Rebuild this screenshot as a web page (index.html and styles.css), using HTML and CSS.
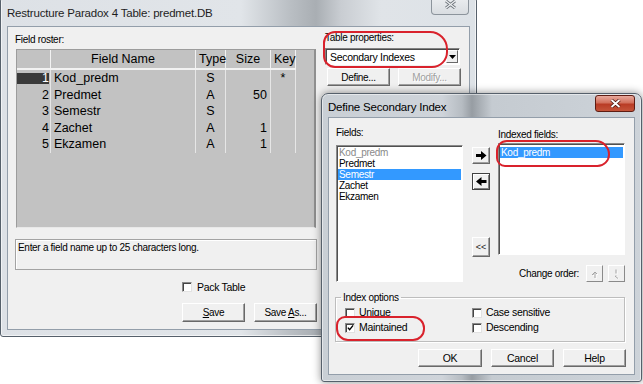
FILE: index.html
```html
<!DOCTYPE html>
<html lang="en">
<head>
    <meta charset="UTF-8">
    <meta name="viewport" content="width=device-width, initial-scale=1.0">
    <title>Restructure Paradox 4 Table</title>
    <link rel="stylesheet" href="styles.css">
</head>
<body>

<div class="desktop">

    <!-- main restructure window (inactive) -->
    <div class="window restructure">
        <div class="titlebar">
            <span class="title">Restructure Paradox 4 Table: predmet.DB</span>
            <span class="close inactive">
                <svg width="11" height="9" viewBox="0 0 11 9">
                    <path d="M1 1 L10 8 M10 1 L1 8" stroke="#6f757b" stroke-width="3" fill="none"/>
                    <path d="M1 1 L10 8 M10 1 L1 8" stroke="#eef0f2" stroke-width="1.2" fill="none"/>
                </svg>
            </span>
        </div>
        <div class="client main-client">
            <div class="roster">
                <div class="label">Field roster:</div>
                <div class="grid">
                    <div class="cell head"></div>
                    <div class="cell head">Field Name</div>
                    <div class="cell head">Type</div>
                    <div class="cell head">Size</div>
                    <div class="cell head">Key</div>
                    <div class="cell head blank"></div>

                    <div class="cell num current">1</div>
                    <div class="cell name">Kod_predm</div>
                    <div class="cell type">S</div>
                    <div class="cell size"></div>
                    <div class="cell key">*</div>
                    <div class="cell blank"></div>

                    <div class="cell num">2</div>
                    <div class="cell name">Predmet</div>
                    <div class="cell type">A</div>
                    <div class="cell size">50</div>
                    <div class="cell key"></div>
                    <div class="cell blank"></div>

                    <div class="cell num">3</div>
                    <div class="cell name">Semestr</div>
                    <div class="cell type">S</div>
                    <div class="cell size"></div>
                    <div class="cell key"></div>
                    <div class="cell blank"></div>

                    <div class="cell num">4</div>
                    <div class="cell name">Zachet</div>
                    <div class="cell type">A</div>
                    <div class="cell size">1</div>
                    <div class="cell key"></div>
                    <div class="cell blank"></div>

                    <div class="cell num">5</div>
                    <div class="cell name">Ekzamen</div>
                    <div class="cell type">A</div>
                    <div class="cell size">1</div>
                    <div class="cell key"></div>
                    <div class="cell blank"></div>
                </div>
                <div class="hint">Enter a field name up to 25 characters long.</div>
                <div class="pack">
                    <span class="check"></span>
                    <span>Pack Table</span>
                </div>
                <div class="btn-row save-row">
                    <button class="btn"><u>S</u>ave</button>
                    <button class="btn">Save <u>A</u>s...</button>
                </div>
            </div>
            <div class="props">
                <div class="label">Table properties:</div>
                <div class="combo">
                    <span class="combo-text">Secondary Indexes</span>
                    <span class="combo-drop">
                        <svg width="7" height="4" viewBox="0 0 7 4"><polygon points="0,0 7,0 3.5,4" fill="#000"/></svg>
                    </span>
                </div>
                <div class="btn-row define-row">
                    <button class="btn">Define...</button>
                    <button class="btn" disabled>Modify...</button>
                </div>
            </div>
        </div>
    </div>

    <!-- define secondary index dialog (active) -->
    <div class="window dialog">
        <div class="titlebar">
            <span class="title">Define Secondary Index</span>
            <span class="close active">
                <svg width="11" height="9" viewBox="0 0 11 9">
                    <path d="M1.5 1 L9.5 8 M9.5 1 L1.5 8" stroke="#4a1710" stroke-width="3.4" fill="none"/>
                    <path d="M1.5 1 L9.5 8 M9.5 1 L1.5 8" stroke="#ffffff" stroke-width="1.8" fill="none"/>
                </svg>
            </span>
        </div>
        <div class="client dlg-client">
            <div class="pickers">
                <div class="fields-col">
                    <div class="label">Fields:</div>
                    <div class="listbox fields">
                        <div class="item used">Kod_predm</div>
                        <div class="item">Predmet</div>
                        <div class="item selected">Semestr</div>
                        <div class="item">Zachet</div>
                        <div class="item">Ekzamen</div>
                    </div>
                </div>
                <div class="movers">
                    <button class="mover add">
                        <svg width="11" height="9" viewBox="0 0 11 9"><polygon points="0,3 5,3 5,0 10.5,4.5 5,9 5,6 0,6" fill="#000"/></svg>
                    </button>
                    <button class="mover remove">
                        <svg width="11" height="9" viewBox="0 0 11 9"><polygon points="10.5,3 5.5,3 5.5,0 0,4.5 5.5,9 5.5,6 10.5,6" fill="#000"/></svg>
                    </button>
                    <button class="mover clear">&lt;&lt;</button>
                </div>
                <div class="indexed-col">
                    <div class="label">Indexed fields:</div>
                    <div class="listbox indexed">
                        <div class="item selected">Kod_predm</div>
                    </div>
                    <div class="order">
                        <span>Change order:</span>
                        <button class="order-btn">
                            <svg width="9" height="10" viewBox="0 0 9 10">
                                <path d="M2 5.5 H3.5 M5 9 V3 M3 5 L5 3 L7 5" stroke="#ffffff" stroke-width="1" fill="none" transform="translate(1 1)"/>
                                <path d="M2 5.5 H3.5 M5 9 V3 M3 5 L5 3 L7 5" stroke="#a3a3a3" stroke-width="1" fill="none"/>
                            </svg>
                        </button>
                        <button class="order-btn">
                            <svg width="9" height="10" viewBox="0 0 9 10">
                                <path d="M4 0.5 V4.5 M4 6.5 V7 M3 7 L6 9.5" stroke="#ffffff" stroke-width="1" fill="none" transform="translate(1 1)"/>
                                <path d="M4 0.5 V4.5 M4 6.5 V7 M3 7 L6 9.5" stroke="#a3a3a3" stroke-width="1" fill="none"/>
                            </svg>
                        </button>
                    </div>
                </div>
            </div>

            <fieldset class="options">
                <legend>Index options</legend>
                <div class="opt-grid">
                    <div class="opt"><span class="check"></span>Unique</div>
                    <div class="opt"><span class="check"></span>Case sensitive</div>
                    <div class="opt">
                        <span class="check">
                            <svg width="8" height="8" viewBox="0 0 8 8"><path d="M1 3.5 L3 6 L7 1" stroke="#000" stroke-width="1.6" fill="none"/></svg>
                        </span>Maintained
                    </div>
                    <div class="opt"><span class="check"></span>Descending</div>
                </div>
            </fieldset>

            <div class="btn-row dlg-buttons">
                <button class="btn ok">OK</button>
                <button class="btn">Cancel</button>
                <button class="btn">Help</button>
            </div>
        </div>
    </div>

    <!-- red hand-drawn marks -->
    <div class="mark mark-props"></div>
    <div class="mark mark-indexed"></div>
    <div class="mark mark-maintained"></div>

</div>

</body>
</html>
```

FILE: styles.css
```css
* {
    box-sizing: border-box;
}

body {
    margin: 0;
    background-color: #ffffff;
    font-family: "Liberation Sans", Arial, sans-serif;
    font-size: 10px;
    letter-spacing: -0.3px;
    color: #000;
}

.desktop {
    position: relative;
    width: 643px;
    height: 384px;
    overflow: hidden;
}

/* window frames */

.window {
    position: absolute;
    display: flex;
    flex-direction: column;
    padding: 0 7px 7px;
    border: 1px solid #56606b;
    border-radius: 7px 7px 3px 3px;
}

.restructure {
    left: 0;
    top: -6px;
    width: 477px;
    height: 343px;
    background: linear-gradient(90deg, #dde1e6 0, #e1e5e9 240px, #b9bec3 290px, #a9aeb3 315px, #c9cdd2 340px, #e0e4e8 380px, #dde2e7 477px);
    box-shadow: inset 0 0 0 1px rgba(255, 255, 255, 0.6);
}

.dialog {
    left: 321px;
    top: 93px;
    width: 321px;
    height: 289px;
    background: linear-gradient(90deg, #c9cfd5 0, #cfd4da 120px, #b6bcc2 140px, #979da3 150px, #c5cbd1 170px, #cdd3d9 321px);
    box-shadow: inset 0 0 0 1px rgba(255, 255, 255, 0.5), 0 0 9px rgba(0, 0, 0, 0.45);
    z-index: 2;
}

.titlebar {
    display: flex;
    justify-content: space-between;
    align-items: flex-start;
    flex: none;
}

.restructure .titlebar {
    height: 32px;
}

.dialog .titlebar {
    height: 24px;
}

.title {
    margin-left: -1px;
    font-size: 11.5px;
    letter-spacing: -0.2px;
    line-height: 14px;
    color: #1e1e1e;
}

.restructure .title {
    padding-top: 11px;
}

.dialog .title {
    padding-top: 6px;
    color: #000;
}

.close {
    display: flex;
    justify-content: center;
    align-items: center;
    border-radius: 0 0 4px 4px;
}

.close.inactive {
    width: 38px;
    height: 20px;
    background: linear-gradient(#eef0f2, #d9dde1);
    border: 1px solid #8c949c;
    border-top: none;
}

.close.active {
    width: 40px;
    height: 17px;
    margin-top: 1px;
    margin-right: -1px;
    border: 1px solid #5e1c12;
    border-radius: 3px;
    background: linear-gradient(#e8a99c 0, #d2705c 45%, #b93c25 55%, #c4543a 100%);
}

.client {
    flex: 1;
    background-color: #f0f0f0;
    box-shadow: 0 0 0 1px #939eaa;
}

.label {
    line-height: 12px;
    height: 12px;
}

/* buttons */

.btn-row {
    display: flex;
    justify-content: flex-end;
}

.btn {
    height: 19px;
    width: 63px;
    padding: 0;
    font-family: inherit;
    font-size: 10px;
    letter-spacing: -0.3px;
    color: #000;
    background-color: #f0f0f0;
    border: 1px solid;
    border-color: #ffffff #696969 #696969 #ffffff;
    box-shadow: inset -1px -1px #a0a0a0;
}

.btn:disabled {
    color: #a0a0a0;
    text-shadow: 1px 1px #ffffff;
}

.btn u {
    text-decoration: underline;
    text-underline-offset: 1px;
}

/* restructure window contents */

.main-client {
    display: flex;
}

.roster {
    width: 302px;
    margin-left: 7px;
    padding-top: 7px;
}

.grid {
    display: grid;
    grid-template-columns: 34px 145px 30px 45px 25px 1fr;
    grid-template-rows: 20px repeat(5, 16.5px);
    align-content: start;
    width: 300px;
    height: 179px;
    margin: 3px 0 0 1px;
    background-color: #c2c2c2;
    border-top: 1px solid #9c9c9c;
    border-left: 1px solid #9c9c9c;
    border-right: 2px solid #8f8f8f;
    border-bottom: 1px solid #e8e8e8;
    font-size: 12.5px;
    letter-spacing: 0;
}

.cell {
    line-height: 16.5px;
    padding: 0 3px;
    border-right: 1px solid #e6e6e6;
    white-space: nowrap;
}

.cell.head {
    line-height: 18px;
    text-align: center;
    border-right-color: #f2f2f2;
    border-bottom: 2px solid #f2f2f2;
}

.cell.blank {
    border: none;
}

.cell.num {
    text-align: right;
    padding: 0 1px 0 0;
}

/* current row marker: dark bar across the number cell */
.cell.num.current {
    background-image: linear-gradient(#3a3a3a, #3a3a3a);
    background-repeat: no-repeat;
    background-position: 0 3px;
    background-size: 100% 11px;
    background-clip: content-box;
    color: #ffffff;
}

.cell.type,
.cell.key {
    text-align: center;
}

.cell.size {
    text-align: right;
}

.hint {
    height: 31px;
    margin-top: 11px;
    padding: 2px 2px;
    border: 1px solid #a3a3a3;
    box-shadow: inset 1px 1px #ffffff;
    line-height: 12px;
}

.pack {
    display: flex;
    align-items: center;
    gap: 5px;
    height: 12px;
    margin-top: 11px;
    padding-left: 167px;
    font-size: 10.5px;
}

.check {
    display: flex;
    justify-content: center;
    align-items: center;
    flex: none;
    width: 10px;
    height: 10px;
    background-color: #ffffff;
    border: 1px solid;
    border-color: #8a8a8a #e2e2e2 #e2e2e2 #8a8a8a;
    box-shadow: inset 1px 1px #454545;
}

.check svg {
    margin: 1px 0 0 1px;
}

.save-row {
    gap: 9px;
    margin-top: 10px;
}

.props {
    width: 137px;
    margin-left: 8px;
    padding-top: 5px;
}

.combo {
    display: flex;
    align-items: center;
    width: 135px;
    height: 17px;
    margin-top: 4px;
    padding: 1px;
    background-color: #ffffff;
    border: 1px solid;
    border-color: #828282 #ffffff #ffffff #828282;
    box-shadow: inset 1px 1px #4a4a4a;
}

.combo-text {
    flex: 1;
    padding-left: 3px;
    font-size: 10.5px;
}

.combo-drop {
    display: flex;
    justify-content: center;
    align-items: center;
    width: 12px;
    height: 13px;
    background-color: #f0f0f0;
    border: 1px solid;
    border-color: #ffffff #696969 #696969 #ffffff;
}

.define-row {
    justify-content: flex-start;
    gap: 8px;
    margin: 3px 0 0 2px;
}

.define-row .btn {
    height: 18px;
}

/* dialog contents */

.dlg-client {
    display: flex;
    flex-direction: column;
}

.pickers {
    display: flex;
    padding-left: 7px;
}

.fields-col {
    width: 127px;
    padding-top: 9px;
}

.listbox {
    background-color: #ffffff;
    border: 1px solid;
    border-color: #8a8a8a #ffffff #ffffff #8a8a8a;
    box-shadow: inset 1px 1px #505050;
    padding: 1px 1px 0 1px;
}

.listbox.fields {
    height: 137px;
    margin-top: 6px;
}

.item {
    line-height: 11px;
    height: 11px;
    padding-left: 1px;
    white-space: nowrap;
}

.item.used {
    color: #8a8a8a;
}

.item.selected {
    background-color: #3399ff;
    color: #ffffff;
}

.movers {
    display: flex;
    flex-direction: column;
    width: 18px;
    margin-left: 9px;
    padding-top: 29px;
}

.mover {
    display: flex;
    justify-content: center;
    align-items: center;
    width: 18px;
    height: 17px;
    padding: 0;
    background-color: #f0f0f0;
    border: 1px solid;
    border-color: #ffffff #696969 #696969 #ffffff;
    box-shadow: inset -1px -1px #a0a0a0;
}

.mover.remove {
    margin-top: 9px;
    border-color: #404040;
    box-shadow: inset 1px 1px #ffffff, inset -1px -1px #808080;
}

.mover.clear {
    height: 20px;
    margin-top: 47px;
    font-family: inherit;
    font-size: 9px;
    letter-spacing: 0;
    color: #222;
}

.indexed-col {
    width: 127px;
    margin-left: 8px;
    padding-top: 11px;
}

.listbox.indexed {
    height: 112px;
    margin-top: 2px;
    padding-top: 3px;
}

.order {
    display: flex;
    justify-content: flex-end;
    align-items: center;
    gap: 5px;
    height: 17px;
    margin-top: 10px;
}

.order span {
    margin-right: 2px;
}

.order-btn {
    display: flex;
    justify-content: center;
    align-items: center;
    width: 17px;
    height: 17px;
    padding: 0;
    background-color: #f0f0f0;
    border: 1px solid;
    border-color: #ffffff #8a8a8a #8a8a8a #ffffff;
}

.options {
    width: 290px;
    margin: 10px 0 0 6px;
    padding: 4px 0 8px 9px;
    border: 1px solid #bdbdbd;
    box-shadow: inset 1px 1px #ffffff, 1px 1px #ffffff;
}

.options legend {
    margin-left: -4px;
    padding: 0 2px;
    line-height: 11px;
}

.opt-grid {
    display: grid;
    grid-template-columns: 127px auto;
    row-gap: 4px;
}

.opt {
    display: flex;
    align-items: center;
    gap: 4px;
    height: 11px;
    line-height: 11px;
    font-size: 10.5px;
}

.dlg-buttons {
    gap: 9px;
    margin-top: 7px;
    padding-right: 8px;
}

.dlg-buttons .btn {
    height: 18px;
    font-size: 10.5px;
}

.dlg-buttons .ok {
    width: 64px;
}

/* red annotation marks drawn over the screenshot */

.mark {
    position: absolute;
    border: 2px solid #d9222c;
    z-index: 5;
}

.mark-props {
    left: 323px;
    top: 31px;
    width: 125px;
    height: 37px;
    border-radius: 12px 18px 16px 12px;
}

.mark-indexed {
    left: 496px;
    top: 140px;
    width: 114px;
    height: 27px;
    border-radius: 12px 16px 14px 10px;
}

.mark-maintained {
    left: 336px;
    top: 316px;
    width: 89px;
    height: 25px;
    border-radius: 9px 12px 12px 12px;
}
```
